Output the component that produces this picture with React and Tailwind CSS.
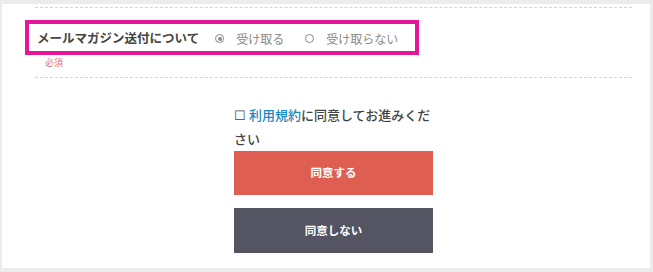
import React from 'react';

const font = { fontFamily: '"Noto Sans CJK JP", "Noto Sans", sans-serif' };

const Radio = ({ checked, label }) => (
    <label className="flex items-center text-[12px] text-[#888]">
        <span className="mr-[12px] flex h-[9px] w-[9px] items-center justify-center rounded-full border border-[#888]">
            {checked && <span className="h-[4px] w-[4px] rounded-full bg-[#888]" />}
        </span>
        {label}
    </label>
);

const App = () => {
    return (
        <div className="h-[272px] w-full bg-[#ececec] pt-[4px] pl-[2px] pr-[3px] pb-[4px]" style={font}>
            <div className="flex h-full flex-col bg-white">
                {/* 上の区切り線 */}
                <div className="mt-[3px] ml-[33px] mr-[18px] border-t border-dashed border-[#d4d4d4]" />

                {/* メールマガジン */}
                <div className="mt-[12px] ml-[23px] flex h-[35px] w-[394px] items-center border-[4px] border-[#e5169a] pl-[8px] pt-[2px]">
                    <span className="mr-[16px] text-[12.5px] font-bold text-[#444]">メールマガジン送付について</span>
                    <div className="flex items-center gap-[21px]">
                        <Radio checked label="受け取る" />
                        <Radio label="受け取らない" />
                    </div>
                </div>
                <span className="ml-[43px] mt-[1px] text-[9px] leading-[13px] text-[#e0756b]">必須</span>

                {/* 下の区切り線 */}
                <div className="mt-[8px] ml-[33px] mr-[18px] border-t border-dashed border-[#d4d4d4]" />

                {/* 同意 */}
                <div className="ml-[232px] mt-[25px] w-[199px]">
                    <p className="text-[13px] font-medium leading-[24px] text-[#444]">
                        ☐ <a className="text-[#1a87c0]">利用規約</a>に同意してお進みください
                    </p>
                    <button className="flex h-[44px] w-full items-center justify-center bg-[#df5e52] text-[11.5px] font-bold text-white">
                        同意する
                    </button>
                    <button className="mt-[13px] flex h-[45px] w-full items-center justify-center bg-[#545463] text-[11.5px] font-bold text-white">
                        同意しない
                    </button>
                </div>
            </div>
        </div>
    );
};

export default App;
